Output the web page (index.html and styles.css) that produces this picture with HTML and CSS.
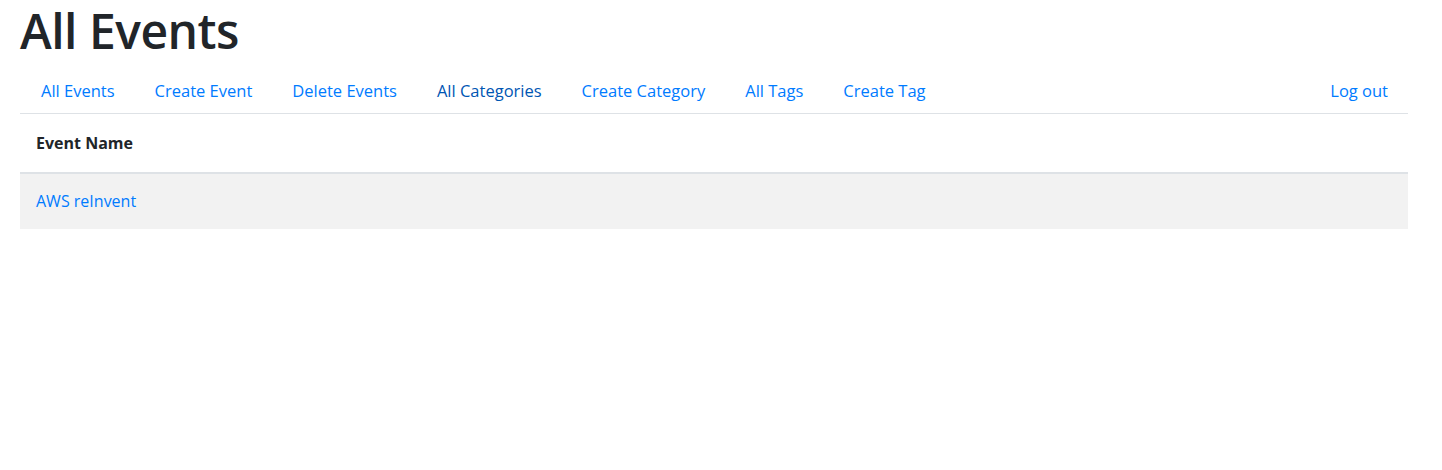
FILE: index.html
```html
<!DOCTYPE html>
<html lang="en">
<head>
<meta charset="utf-8">
<title>All Events</title>
<link rel="stylesheet" href="styles.css">
</head>
<body>
<div class="container">
  <h1 class="title">All Events</h1>
  <nav class="nav">
    <ul class="nav-left">
      <li><a class="nav-link" href="#">All Events</a></li>
      <li><a class="nav-link" href="#">Create Event</a></li>
      <li><a class="nav-link" href="#">Delete Events</a></li>
      <li><a class="nav-link active" href="#">All Categories</a></li>
      <li><a class="nav-link" href="#">Create Category</a></li>
      <li><a class="nav-link" href="#">All Tags</a></li>
      <li><a class="nav-link" href="#">Create Tag</a></li>
    </ul>
    <a class="nav-link" href="#">Log out</a>
  </nav>
  <table class="table">
    <thead>
      <tr><th>Event Name</th></tr>
    </thead>
    <tbody>
      <tr class="row-striped"><td><a class="cell-link" href="#">AWS reInvent</a></td></tr>
    </tbody>
  </table>
</div>
</body>
</html>
```

FILE: styles.css
```css
html, body {
  margin: 0;
  padding: 0;
  background: #fff;
}
body {
  font-family: "Open Sans", "Noto Sans", sans-serif;
  font-size: 16px;
  color: #212529;
}
.container {
  width: 1388px;
  padding: 0 0 0 20px;
}
.title {
  margin: 0;
  font-size: 48px;
  font-weight: 600;
  line-height: 62px;
  height: 60px;
  color: #212529;
  letter-spacing: -0.5px;
}
.nav {
  display: flex;
  justify-content: space-between;
  align-items: center;
  border-bottom: 1px solid #dee2e6;
  height: 54px;
  box-sizing: border-box;
  padding-top: 8px;
}
.nav-left {
  list-style: none;
  margin: 0;
  padding: 0 0 0 1px;
  display: flex;
}
.nav-link {
  display: block;
  padding: 8px 20px;
  color: #007bff;
  text-decoration: none;
  line-height: 24px;
  font-size: 16.5px;
}
.nav-link.active {
  color: #0056b3;
}
.table {
  width: 100%;
  border-collapse: collapse;
}
.table th {
  text-align: left;
  font-weight: 700;
  padding: 16px 16px;
  height: 59px;
  box-sizing: border-box;
  border-bottom: 2px solid #dee2e6;
}
.table td {
  padding: 15px 16px 17px;
  height: 56px;
  box-sizing: border-box;
}
.row-striped {
  background: #f2f2f2;
}
.cell-link {
  color: #007bff;
  text-decoration: none;
}
```
